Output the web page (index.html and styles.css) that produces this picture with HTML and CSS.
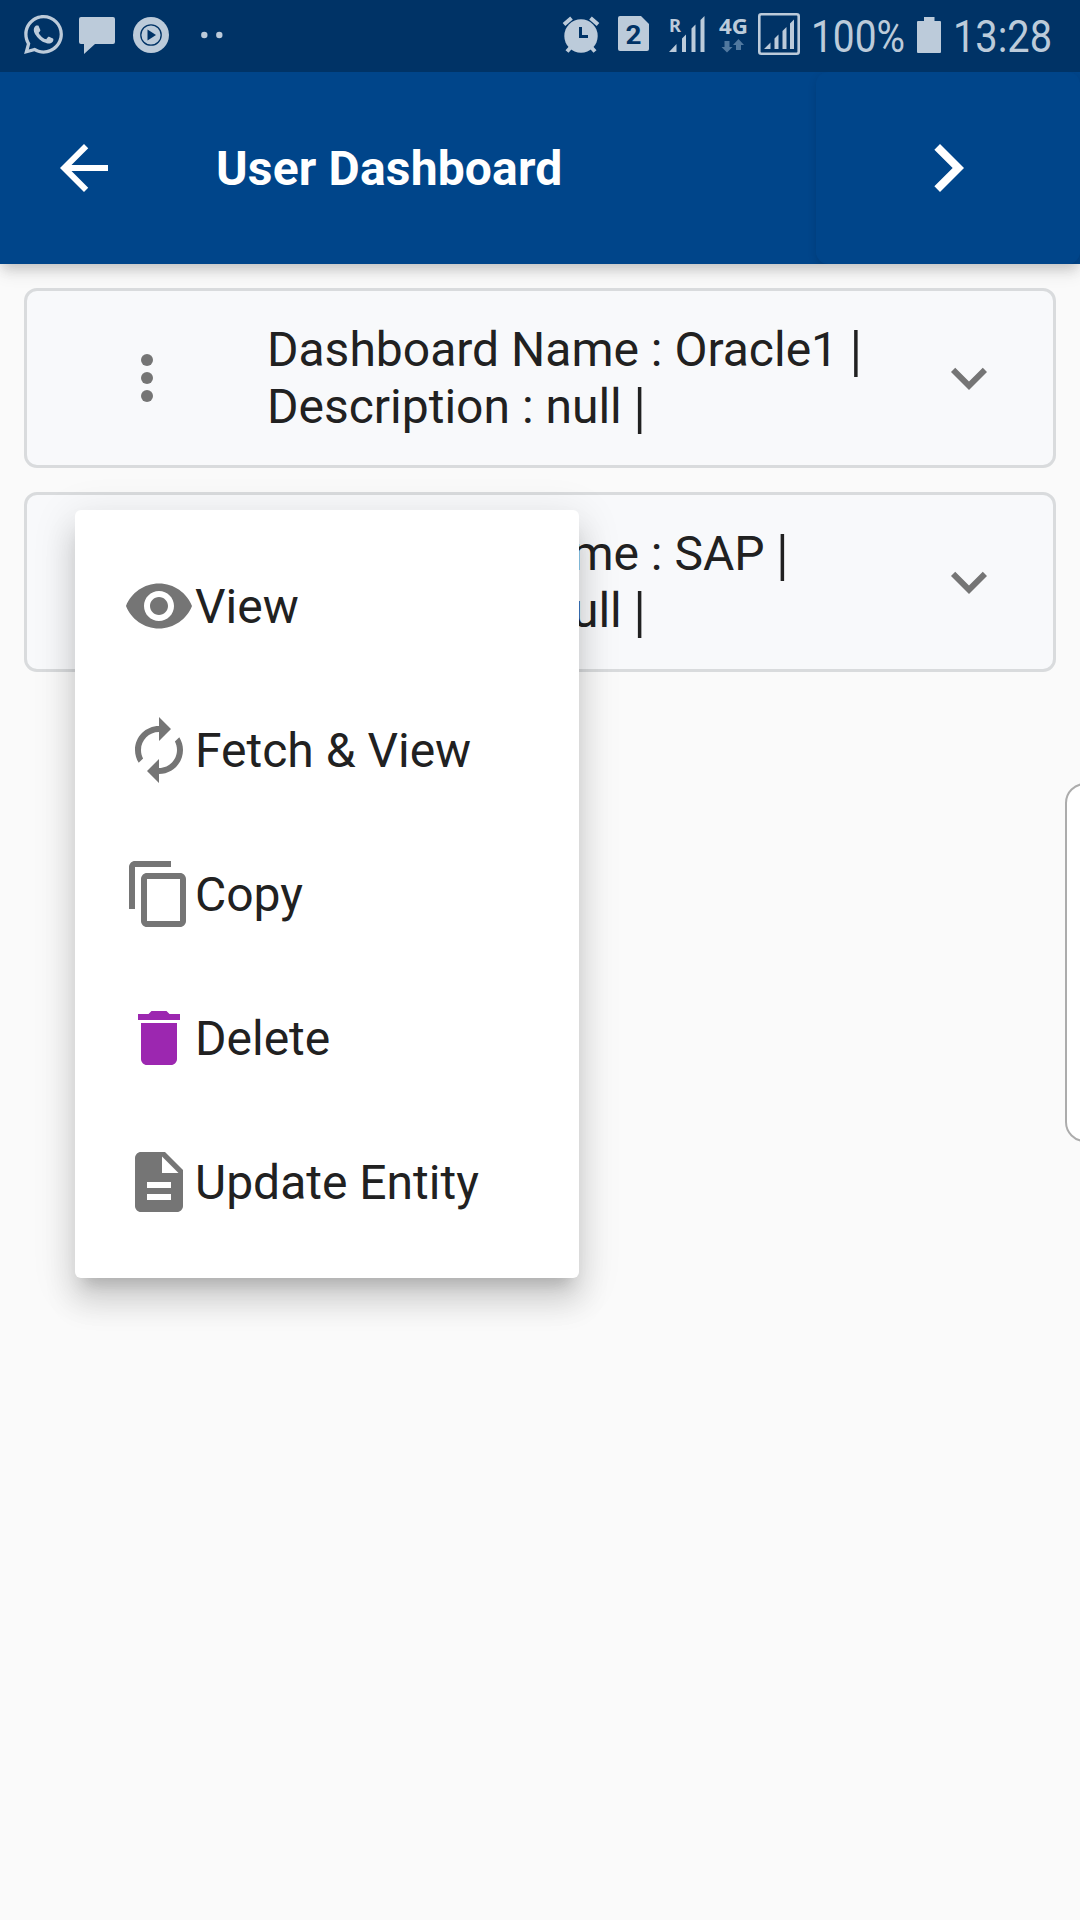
FILE: index.html
```html
<!DOCTYPE html>
<html lang="en">
<head>
<meta charset="utf-8">
<title>User Dashboard</title>
<link rel="stylesheet" href="styles.css">
</head>
<body>
<div class="screen">
  <div class="status">
    <div class="status-left">
      <svg class="s-wa" width="39" height="39" viewBox="0 0 24 24"><path d="M.057 24l1.687-6.163c-1.041-1.804-1.588-3.849-1.587-5.946.003-6.556 5.338-11.891 11.893-11.891 3.181.001 6.167 1.24 8.413 3.488 2.245 2.248 3.481 5.236 3.48 8.414-.003 6.557-5.338 11.892-11.893 11.892-1.99-.001-3.951-.5-5.688-1.448l-6.305 1.654zm6.597-3.807c1.676.995 3.276 1.591 5.392 1.592 5.448 0 9.886-4.434 9.889-9.885.002-5.462-4.415-9.89-9.881-9.892-5.452 0-9.887 4.434-9.889 9.884-.001 2.225.651 3.891 1.746 5.634l-.999 3.648 3.742-.981zm11.387-5.464c-.074-.124-.272-.198-.57-.347-.297-.149-1.758-.868-2.031-.967-.272-.099-.47-.149-.669.149-.198.297-.768.967-.941 1.165-.173.198-.347.223-.644.074-.297-.149-1.255-.462-2.39-1.475-.883-.788-1.48-1.761-1.653-2.059-.173-.297-.018-.458.13-.606.134-.133.297-.347.446-.521.151-.172.2-.296.3-.495.099-.198.05-.372-.025-.521-.075-.148-.669-1.611-.916-2.206-.242-.579-.487-.501-.669-.51l-.57-.01c-.198 0-.52.074-.792.372s-1.04 1.016-1.04 2.479 1.065 2.876 1.213 3.074c.149.198 2.095 3.2 5.076 4.487.709.306 1.263.489 1.694.626.712.226 1.36.194 1.872.118.571-.085 1.758-.719 2.006-1.413.248-.695.248-1.29.173-1.414z"/></svg>
      <svg class="s-msg" width="36" height="72"><path d="M2 17H34Q36 17 36 19V42Q36 44 34 44H16L5 54V44H2Q0 44 0 42V19Q0 17 2 17Z"/></svg>
      <svg class="s-play" width="36" height="72"><circle cx="18" cy="35" r="18"/><circle class="cut-line" cx="18" cy="35" r="10.2"/><path class="cut" d="M14.5 29.5L23 35L14.5 40.5Z"/></svg>
      <svg class="s-dots" width="22" height="72"><circle cx="3.3" cy="35" r="3.2"/><circle cx="18.3" cy="35" r="3.2"/></svg>
    </div>
    <div class="status-right">
      <svg class="s-alarm" width="36" height="72"><circle cx="18" cy="36" r="16.7"/><path class="line" stroke-width="4" d="M1 24.5L8.500 18M35 24.500L27.500 18M4 51.500L8 47M32 51.500L28 47"/><path class="cut-line" stroke-width="3" d="M17.500 27V36.500H25"/></svg>
      <svg class="s-sim" width="31" height="72"><path d="M2 16H23L31 24V49Q31 51 29 51H2Q0 51 0 49V18Q0 16 2 16Z"/><text class="cut bold" x="7.500" y="44" font-size="26" textLength="16" lengthAdjust="spacingAndGlyphs">2</text></svg>
      <svg class="s-roam" width="36" height="72"><text class="noto" x="0" y="31.500" font-size="18" textLength="12" lengthAdjust="spacingAndGlyphs">R</text><path d="M0 52L7.500 44V52ZM13 52V38.500L17 34.500V52ZM22.500 52V28.500L26.500 24.500V52ZM31.500 52V20L35.500 16V52Z"/></svg>
      <svg class="s-4g" width="30" height="72"><text class="noto" x="0" y="34" font-size="22" textLength="29" lengthAdjust="spacingAndGlyphs">4G</text><path class="dim" d="M5.500 41H10.500V47H13.500L8 52.500L2.500 47H5.500ZM17 50V45H14L19.500 39L25 45H22V50Z"/></svg>
      <svg class="s-box" width="42" height="72"><rect class="line" x="1.300" y="14.300" width="39.400" height="39.400" rx="2" stroke-width="2.600"/><path d="M6 49L12.500 42.500V49ZM16.500 49V38.500L20.500 34.500V49ZM24.500 49V31L28.500 27V49ZM32 49V23.500L36 19.500V49Z"/></svg>
      <svg class="s-pct" width="92" height="72"><text class="clock" x="-2" y="52" textLength="94" lengthAdjust="spacingAndGlyphs">100%</text></svg>
      <svg class="s-bat" width="24" height="72"><path d="M7 17H17.500V21H23Q24 21 24 22V52Q24 53 23 53H1Q0 53 0 52V22Q0 21 1 21H7Z"/></svg>
      <svg class="s-time" width="98" height="72"><text class="clock" x="-3" y="52" textLength="99" lengthAdjust="spacingAndGlyphs">13:28</text></svg>
    </div>
  </div>

  <header class="header">
    <svg class="icon back" viewBox="0 0 24 24"><path d="M20 11H7.830l5.590-5.590L12 4l-8 8 8 8 1.410-1.410L7.830 13H20v-2z"/></svg>
    <h1 class="title">User Dashboard</h1>
    <div class="next"><svg class="icon-next" viewBox="0 0 24 24"><path d="M10 6L8.590 7.410 13.170 12l-4.580 4.590L10 18l6-6z"/></svg></div>
  </header>

  <main class="list">
    <section class="card">
      <svg class="icon more" viewBox="0 0 24 24"><circle cx="12" cy="6" r="2"/><circle cx="12" cy="12" r="2"/><circle cx="12" cy="18" r="2"/></svg>
      <p class="card-text">Dashboard Name : Oracle1 <span class="pipe">|</span><br>Description : null <span class="pipe">|</span></p>
      <svg class="icon" viewBox="0 0 24 24"><path d="M16.590 8.590L12 13.170 7.410 8.590 6 10l6 6 6-6z"/></svg>
    </section>
    <section class="card">
      <svg class="icon more" viewBox="0 0 24 24"><circle cx="12" cy="6" r="2"/><circle cx="12" cy="12" r="2"/><circle cx="12" cy="18" r="2"/></svg>
      <p class="card-text">Dashboard Name : SAP <span class="pipe">|</span><br>Description : null <span class="pipe">|</span></p>
      <svg class="icon" viewBox="0 0 24 24"><path d="M16.590 8.590L12 13.170 7.410 8.590 6 10l6 6 6-6z"/></svg>
    </section>
  </main>

  <div class="edge"></div>

  <div class="menu">
    <div class="item"><svg class="icon" viewBox="0 0 24 24"><path d="M12 4.500C7 4.500 2.730 7.610 1 12c1.730 4.390 6 7.500 11 7.500s9.270-3.110 11-7.500c-1.730-4.390-6-7.500-11-7.500zM12 17c-2.760 0-5-2.240-5-5s2.240-5 5-5 5 2.240 5 5-2.240 5-5 5zm0-8c-1.660 0-3 1.340-3 3s1.340 3 3 3 3-1.340 3-3-1.340-3-3-3z"/></svg>View</div>
    <div class="item"><svg class="icon" viewBox="0 0 24 24"><path d="M12 6v3l4-4-4-4v3c-4.420 0-8 3.580-8 8 0 1.570.46 3.030 1.240 4.260L6.700 14.800c-.45-.83-.7-1.790-.7-2.800 0-3.310 2.690-6 6-6zm6.760 1.740L17.300 9.200c.44.840.7 1.790.7 2.800 0 3.310-2.690 6-6 6v-3l-4 4 4 4v-3c4.420 0 8-3.580 8-8 0-1.570-.46-3.030-1.240-4.260z"/></svg>Fetch &amp; View</div>
    <div class="item"><svg class="icon" viewBox="0 0 24 24"><path d="M16 1H4c-1.100 0-2 .9-2 2v14h2V3h12V1zm3 4H8c-1.100 0-2 .9-2 2v14c0 1.100.9 2 2 2h11c1.100 0 2-.9 2-2V7c0-1.100-.9-2-2-2zm0 16H8V7h11v14z"/></svg>Copy</div>
    <div class="item"><svg class="icon purple" viewBox="0 0 24 24"><path d="M6 19c0 1.100.9 2 2 2h8c1.100 0 2-.9 2-2V7H6v12zM19 4h-3.500l-1-1h-5l-1 1H5v2h14V4z"/></svg>Delete</div>
    <div class="item"><svg class="icon" viewBox="0 0 24 24"><path d="M14 2H6c-1.100 0-1.990.9-1.990 2L4 20c0 1.100.89 2 1.990 2H18c1.100 0 2-.9 2-2V8l-6-6zm2 16H8v-2h8v2zm0-4H8v-2h8v2zm-3-5V3.500L18.500 9H13z"/></svg>Update Entity</div>
  </div>
</div>
</body>
</html>
```
FILE: styles.css
```css
body { margin: 0; }
.screen {
  position: relative;
  width: 1080px;
  height: 1920px;
  overflow: hidden;
  background: #fafafa;
  color: #212121;
  font: 48px/57px Roboto, sans-serif;
}
svg { display: block; flex: none; fill: currentColor; overflow: visible; }

.status {
  position: relative;
  z-index: 2;
  display: flex;
  justify-content: space-between;
  height: 72px;
  padding: 0 28px 0 24px;
  background: #003366;
  color: #bccbda;
}
.status-left, .status-right { display: flex; }
.s-wa { margin-top: 15px; }
.s-msg { margin-left: 16px; }
.s-play { margin-left: 18px; }
.s-dots { margin-left: 32px; }
.s-sim { margin-left: 19px; }
.s-roam { margin-left: 20px; }
.s-4g { margin-left: 14px; }
.s-box { margin-left: 9px; }
.s-pct { margin-left: 13px; }
.s-bat { margin-left: 12px; }
.s-time { margin-left: 15px; margin-right: -2px; }
.clock { font-size: 45px; }
.bold { font-weight: 700; }
.noto { font-family: "Noto Sans", sans-serif; font-weight: 700; }
.cut { fill: #003366; }
.cut-line { fill: none; stroke: #003366; stroke-width: 1.3; }
.cut-line[stroke-width] { stroke-width: 3; }
.line { fill: none; stroke: currentColor; }
.dim { fill: #50789f; }

.icon { width: 72px; height: 72px; color: #757575; }

.header {
  position: relative;
  z-index: 1;
  display: flex;
  align-items: center;
  height: 192px;
  background: #00458a;
  color: #fff;
  box-shadow: 0 6px 12px -3px rgba(0,0,0,.16), 0 12px 15px rgba(0,0,0,.06), 0 3px 18px rgba(0,0,0,.05);
}
.back { margin-left: 48px; color: #fff; }
.title { flex: 1; margin: 0 0 0 96px; font-size: 48px; font-weight: 700; letter-spacing: 0.17px; }
.next {
  display: flex;
  align-items: center;
  justify-content: center;
  width: 264px;
  height: 192px;
  border-radius: 12px;
  background: #00458a;
  box-shadow: 0 3px 9px rgba(0,0,0,.13);
  clip-path: inset(0 0 0 -20px);
}
.icon-next { width: 96px; height: 96px; }

.list { display: flex; flex-direction: column; gap: 24px; padding: 24px; }
.card {
  display: flex;
  align-items: center;
  box-sizing: border-box;
  height: 180px;
  padding: 0 48px 0 84px;
  border: 3px solid #d9dbdd;
  border-radius: 13px;
  background: #f8f9fb;
}
.card-text { flex: 1; margin: 0 0 0 84px; }
.pipe { display: inline-block; transform: translateY(1px) scaleY(1.17); }

.edge {
  position: absolute;
  left: 1065px;
  top: 783px;
  box-sizing: border-box;
  width: 40px;
  height: 359px;
  border: 2px solid #acacac;
  border-radius: 20px;
  background: #fff;
}

.menu {
  position: absolute;
  left: 75px;
  top: 510px;
  box-sizing: border-box;
  width: 504px;
  height: 768px;
  padding: 24px 48px;
  border-radius: 6px;
  background: #fff;
  box-shadow: 0 15px 15px -9px rgba(0,0,0,.17), 0 24px 30px 3px rgba(0,0,0,.11), 0 9px 42px 6px rgba(0,0,0,.09);
}
.item { display: flex; align-items: center; height: 144px; }
.purple { color: #9c27b0; }
```
